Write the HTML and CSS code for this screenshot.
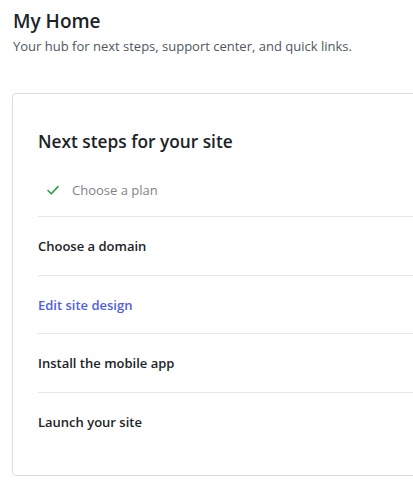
FILE: index.html
```html
<!DOCTYPE html>
<html>
<head>
<meta charset="utf-8">
<link rel="stylesheet" href="styles.css">
</head>
<body>
<div class="page">
  <header class="header">
    <h1 class="title">My Home</h1>
    <p class="subtitle">Your hub for next steps, support center, and quick links.</p>
  </header>
  <section class="card">
    <h2 class="card-title">Next steps for your site</h2>
    <ul class="steps">
      <li class="step step-done">
        <svg class="check" width="14" height="14" viewBox="0 0 14 14"><path d="M2 7.5 L5.3 10.8 L12 3.6" fill="none" stroke="#2e9e45" stroke-width="1.6" stroke-linecap="round" stroke-linejoin="round"/></svg>
        <span>Choose a plan</span>
      </li>
      <li class="step">Choose a domain</li>
      <li class="step step-active">Edit site design</li>
      <li class="step">Install the mobile app</li>
      <li class="step">Launch your site</li>
    </ul>
  </section>
</div>
</body>
</html>
```
FILE: styles.css
```css
html, body {
  margin: 0;
  padding: 0;
  background: #ffffff;
  overflow: hidden;
}
body {
  font-family: "Open Sans", "Noto Sans", sans-serif;
  color: #1d2327;
}
.page {
  padding: 8px 0 0 13px;
  overflow: hidden;
}
.title {
  margin: 0;
  font-size: 19px;
  font-weight: 600;
  line-height: 26px;
}
.subtitle {
  margin: 3px 0 0;
  font-size: 13px;
  line-height: 18px;
  color: #50575e;
}
.card {
  margin: 38px -40px 0 -1px;
  border: 1px solid #dcdcde;
  border-radius: 4px;
  padding: 36px 0 24px 25px;
}
.card-title {
  margin: 0;
  font-size: 17.3px;
  font-weight: 600;
  line-height: 24px;
}
.steps {
  list-style: none;
  margin: 27px 0 0;
  padding: 0;
}
.step {
  display: flex;
  align-items: center;
  font-size: 13px;
  font-weight: 600;
  height: 57.7px;
  border-bottom: 1px solid #e6e6e8;
}
.step:last-child {
  border-bottom: none;
}
.step-done {
  height: 35px;
  align-items: flex-start;
  padding-left: 8px;
  gap: 12px;
  font-weight: 400;
  color: #7f8388;
}
.step-done .check {
  margin-top: 2px;
}
.step-active {
  color: #4f5ee8;
}
```
